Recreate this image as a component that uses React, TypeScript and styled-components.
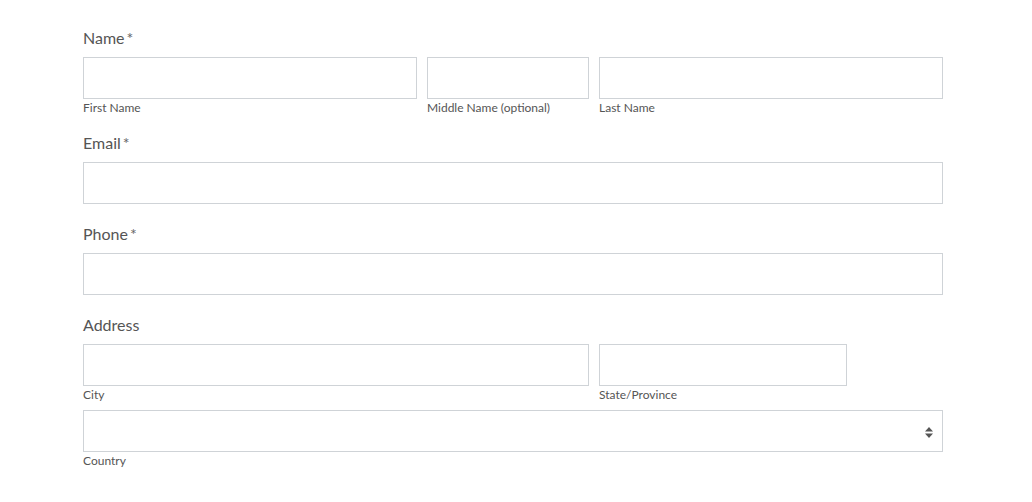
import styled, { createGlobalStyle } from 'styled-components';

const GlobalStyle = createGlobalStyle`
  body {
    margin: 0;
    background: #ffffff;
    font-family: Lato, "Open Sans", sans-serif;
    color: #555555;
  }
`;

const Form = styled.form`
  width: 860px;
  padding: 28px 0 0 83px;
`;

const Field = styled.div<{ $tight?: boolean }>`
  margin-bottom: ${(p) => (p.$tight ? '17px' : '20px')};
`;

const Label = styled.div`
  font-size: 16px;
  line-height: 20px;
  color: #555555;
  margin-bottom: 9px;
`;

const Star = styled.span`
  margin-left: 2px;
  color: #666666;
`;

const Row = styled.div<{ $cols: string }>`
  display: grid;
  grid-template-columns: ${(p) => p.$cols};
  column-gap: 10px;
`;

const Cell = styled.div``;

const Input = styled.input`
  display: block;
  box-sizing: border-box;
  width: 100%;
  height: 42px;
  border: 1px solid #cfd3d7;
  border-radius: 0;
  background: #ffffff;
  outline: none;
  padding: 0 10px;
  font-family: inherit;
  font-size: 14px;
`;

const Sub = styled.div`
  font-size: 12px;
  line-height: 16px;
  margin-top: 1px;
  color: #555555;
`;

const SelectBox = styled.div`
  position: relative;
  box-sizing: border-box;
  height: 42px;
  border: 1px solid #cfd3d7;
  margin-top: 7px;
`;

const Arrows = styled.svg`
  position: absolute;
  right: 7px;
  top: 14px;
`;

function App() {
  return (
    <>
      <GlobalStyle />
      <Form>
        <Field $tight>
          <Label>
            Name<Star>*</Star>
          </Label>
          <Row $cols="334px 162px 344px">
            <Cell>
              <Input />
              <Sub>First Name</Sub>
            </Cell>
            <Cell>
              <Input />
              <Sub>Middle Name (optional)</Sub>
            </Cell>
            <Cell>
              <Input />
              <Sub>Last Name</Sub>
            </Cell>
          </Row>
        </Field>
        <Field>
          <Label>
            Email<Star>*</Star>
          </Label>
          <Input />
        </Field>
        <Field>
          <Label>
            Phone<Star>*</Star>
          </Label>
          <Input />
        </Field>
        <Field>
          <Label>Address</Label>
          <Row $cols="506px 248px">
            <Cell>
              <Input />
              <Sub>City</Sub>
            </Cell>
            <Cell>
              <Input />
              <Sub>State/Province</Sub>
            </Cell>
          </Row>
          <SelectBox>
            <Arrows width="12" height="14" viewBox="0 0 12 14">
              <path d="M6 2 L10 6.5 L2 6.5 Z" fill="#555" />
              <path d="M2 8.5 L10 8.5 L6 13 Z" fill="#555" />
            </Arrows>
          </SelectBox>
          <Sub>Country</Sub>
        </Field>
      </Form>
    </>
  );
}

export default App;
